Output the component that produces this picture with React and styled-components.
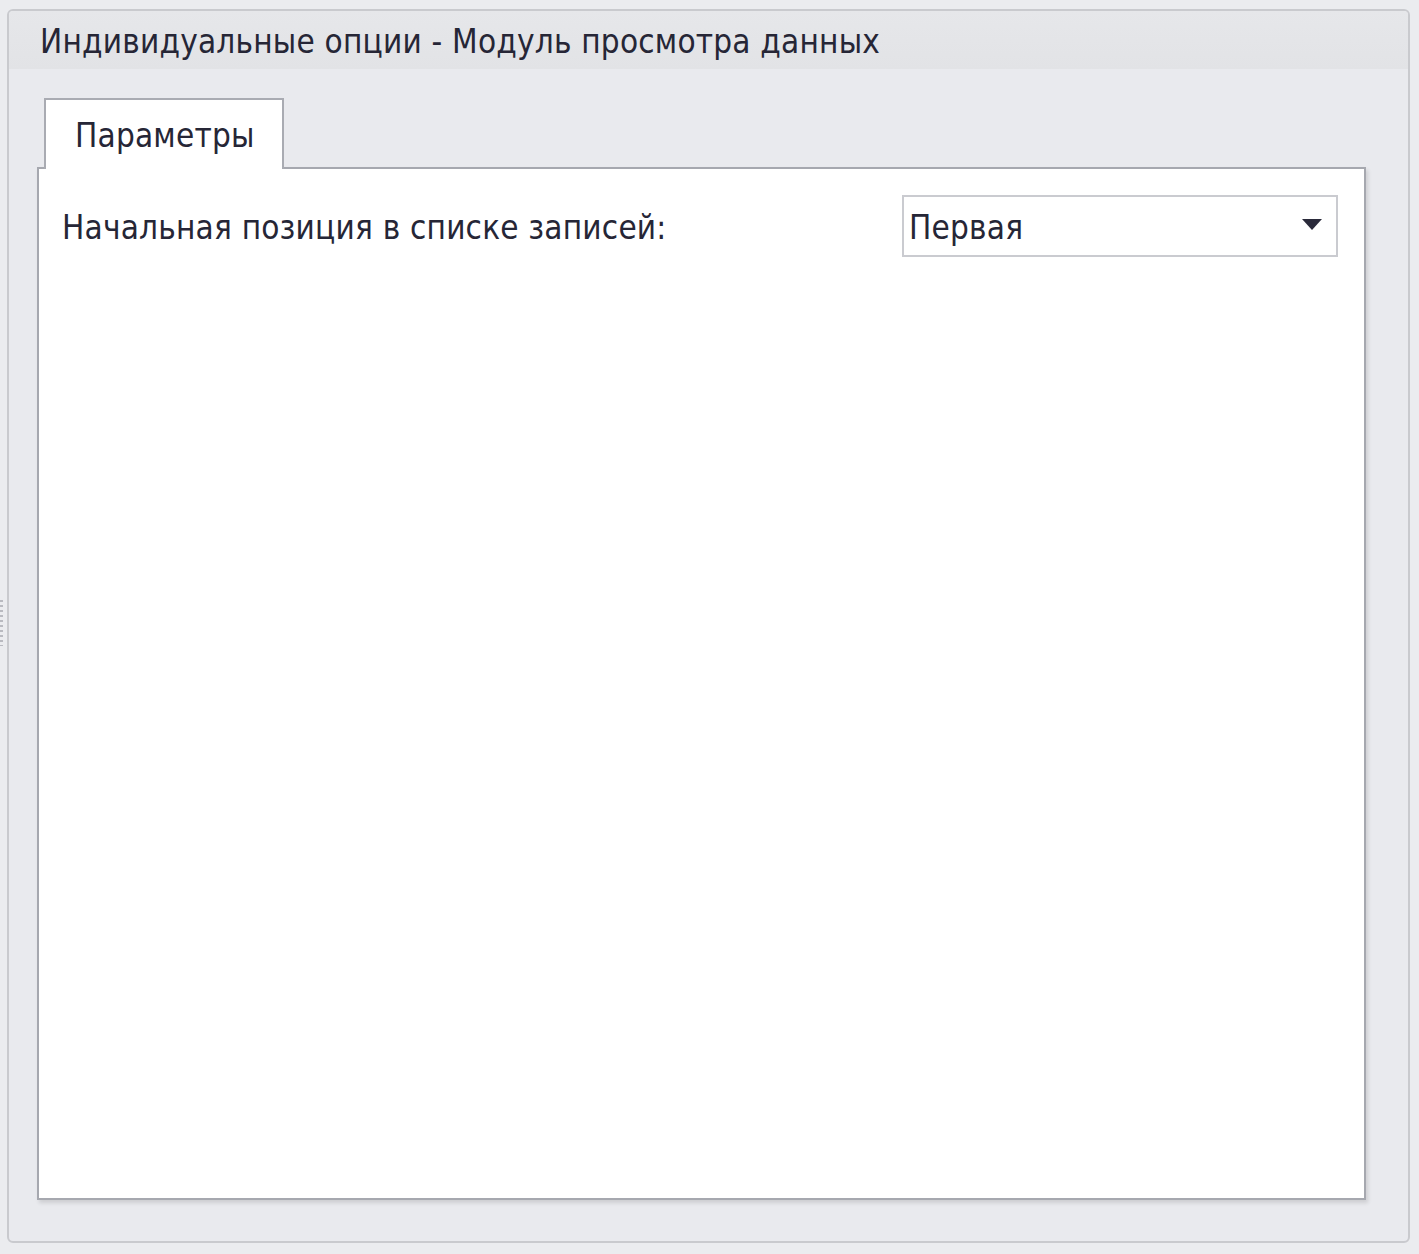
import React from 'react';
import styled, { createGlobalStyle } from 'styled-components';

const GlobalStyle = createGlobalStyle`
    body {
        margin: 0;
        background: #ebecef;
        font-family: "DejaVu Sans Condensed", "DejaVu Sans", sans-serif;
        color: #1f1f2e;
    }
`;

const Screen = styled.div`
    position: relative;
    width: 1419px;
    height: 1254px;
    padding: 9px 9px 0 7px;
    box-sizing: border-box;
`;

const Grip = styled.div`
    position: absolute;
    left: 0;
    top: 600px;
    width: 3px;
    height: 46px;
    background: repeating-linear-gradient(#b9bac0 0 2px, transparent 2px 5px);
`;

const GroupBox = styled.section`
    height: 1234px;
    box-sizing: border-box;
    border: 2px solid #c9cace;
    border-radius: 6px;
    background: #e9eaee;
    display: flex;
    flex-direction: column;
`;

const GroupHeader = styled.header`
    height: 58px;
    flex: none;
    display: flex;
    align-items: center;
    padding: 2px 0 0 31px;
    box-sizing: border-box;
    background: linear-gradient(#e6e7ea, #e2e3e6);
    border-radius: 4px 4px 0 0;
    font-size: 33px;
    letter-spacing: 0.2px;
    color: #262636;
`;

const GroupBody = styled.div`
    flex: 1;
    display: flex;
    flex-direction: column;
    padding: 29px 42px 41px 28px;
`;

const TabStrip = styled.div`
    display: flex;
    padding-left: 7px;
    margin-bottom: -2px;
    position: relative;
    z-index: 1;
`;

const Tab = styled.div`
    width: 240px;
    height: 71px;
    box-sizing: border-box;
    border: 2px solid #a9abb2;
    border-bottom: none;
    background: #ffffff;
    display: flex;
    align-items: center;
    padding: 2px 0 0 29px;
    font-size: 33px;
    letter-spacing: 0.2px;
    color: #262636;
`;

const TabPage = styled.div`
    flex: 1;
    background: #ffffff;
    border: 2px solid #a6a8af;
    box-shadow: 2px 3px 4px rgba(0, 0, 0, 0.12);
    padding: 26px 26px 0 23px;
`;

const FieldRow = styled.div`
    display: flex;
    align-items: center;
    justify-content: space-between;
`;

const Label = styled.label`
    font-size: 33px;
    letter-spacing: 0.2px;
    color: #262636;
    padding-top: 2px;
`;

const Combo = styled.div`
    width: 436px;
    height: 62px;
    box-sizing: border-box;
    border: 2px solid #cacbd0;
    display: flex;
    align-items: center;
    justify-content: space-between;
    padding: 2px 14px 0 5px;
    font-size: 33px;
    letter-spacing: 0.2px;
    color: #262636;
`;

const Arrow = styled.span`
    width: 0;
    height: 0;
    border-left: 10px solid transparent;
    border-right: 10px solid transparent;
    border-top: 11px solid #2a2a3a;
    margin-bottom: 6px;
`;

const App = () => {
    return (
        <Screen>
            <GlobalStyle />
            <Grip />
            <GroupBox>
                <GroupHeader>Индивидуальные опции - Модуль просмотра данных</GroupHeader>
                <GroupBody>
                    <TabStrip>
                        <Tab>Параметры</Tab>
                    </TabStrip>
                    <TabPage>
                        <FieldRow>
                            <Label>Начальная позиция в списке записей:</Label>
                            <Combo>
                                <span>Первая</span>
                                <Arrow />
                            </Combo>
                        </FieldRow>
                    </TabPage>
                </GroupBody>
            </GroupBox>
        </Screen>
    );
};

export default App;
